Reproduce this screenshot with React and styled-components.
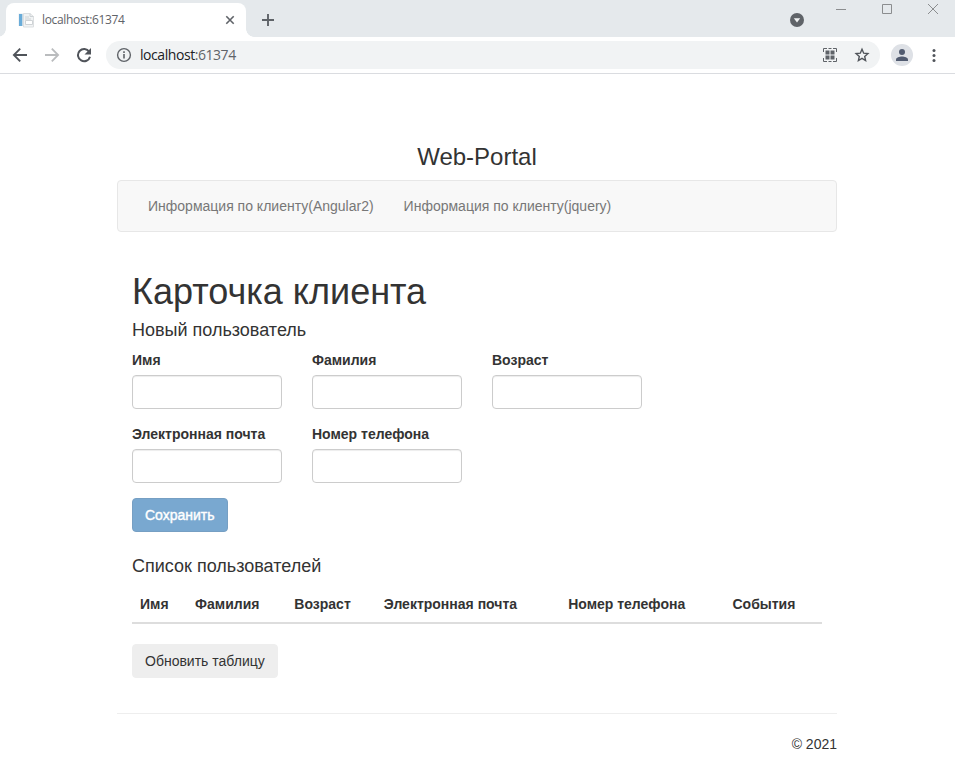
import React from "react";
import styled, { createGlobalStyle } from "styled-components";

const GlobalStyle = createGlobalStyle`
  *, *::before, *::after { box-sizing: border-box; }
  body {
    margin: 0;
    background: #fff;
    color: #333;
    font: 14px/20px "Liberation Sans", Arial, sans-serif;
  }
`;

const Screen = styled.div`
  height: 766px;
  overflow: hidden;
`;

/* Browser window */

const TabStrip = styled.div`
  display: flex;
  align-items: flex-start;
  height: 37px;
  background: #e5e9ec;
  color: #5f6368;
`;

const Tab = styled.div`
  position: relative;
  display: flex;
  align-items: center;
  width: 240px;
  height: 34px;
  margin: 3px 0 0 6px;
  padding: 0 10px 0 12px;
  border-radius: 8px 8px 0 0;
  background: #fff;

  &::before,
  &::after {
    content: "";
    position: absolute;
    bottom: 0;
    width: 8px;
    height: 8px;
  }
  &::before {
    left: -8px;
    background: radial-gradient(circle at 0 0, transparent 7.5px, #fff 8px);
  }
  &::after {
    right: -8px;
    background: radial-gradient(circle at 100% 0, transparent 7.5px, #fff 8px);
  }
`;

const TabTitle = styled.span`
  flex: 1;
  margin-left: 8px;
  font: 12px/16px "Open Sans", "Noto Sans", sans-serif;
  letter-spacing: -0.34px;
`;

const NewTab = styled.div`
  display: flex;
  margin: 13px 0 0 15px;
`;

const TabSearch = styled.div`
  display: flex;
  margin: 13px 0 0 auto;
`;

const WindowButtons = styled.div`
  display: flex;
  gap: 36px;
  margin: 4px 17px 0 32px;
`;

const Toolbar = styled.div`
  display: flex;
  align-items: center;
  height: 37px;
  padding: 0 13px 0 12px;
  border-bottom: 1px solid #dadce0;
  background: #fff;
  color: #5f6368;
`;

const NavButtons = styled.div`
  display: flex;
  gap: 16px;
`;

const AddressBar = styled.div`
  display: flex;
  flex: 1;
  align-items: center;
  height: 28px;
  margin: 0 11px 0 14px;
  padding: 0 10px;
  border-radius: 14px;
  background: #f1f3f4;
`;

const Address = styled.span`
  flex: 1;
  margin-left: 8px;
  color: #5f6368;
  font: 14px/20px "Open Sans", "Noto Sans", sans-serif;
  letter-spacing: -0.44px;
`;

const Host = styled.span`
  color: #202124;
`;

const AddressActions = styled.div`
  display: flex;
  gap: 16px;
`;

const Avatar = styled.div`
  display: flex;
  align-items: center;
  justify-content: center;
  width: 22px;
  height: 22px;
  margin-right: 13px;
  border-radius: 50%;
  background: #dee1e6;
`;

const Icon = styled.svg`
  display: block;
  flex: none;
`;

/* Page */

const Container = styled.div`
  width: 720px;
  margin: 0 0 0 117px;
  padding-top: 70px;
`;

const SiteTitle = styled.h3`
  margin: 0 0 10px;
  font-size: 24px;
  font-weight: 400;
  line-height: 26px;
  text-align: center;
`;

const Navbar = styled.nav`
  display: flex;
  align-items: center;
  height: 52px;
  padding: 0 15px;
  border: 1px solid #e7e7e7;
  border-radius: 4px;
  background: #f8f8f8;
`;

const NavLink = styled.a`
  padding: 15px;
  color: #777;
  text-decoration: none;
`;

const Content = styled.main`
  padding: 40px 15px 35px;
`;

const Title = styled.h1`
  margin: 0 0 8px;
  font-size: 36px;
  font-weight: 400;
  line-height: 40px;
`;

const SectionTitle = styled.h4`
  margin: 0 0 10px;
  font-size: 18px;
  font-weight: 400;
  line-height: 20px;
`;

const Form = styled.form`
  margin-bottom: 24px;
`;

const Fields = styled.div`
  display: grid;
  grid-template-columns: repeat(3, 150px);
  gap: 15px 30px;
  margin-bottom: 15px;
`;

const Label = styled.label`
  display: flex;
  flex-direction: column;
  gap: 5px;
  font-weight: 700;
  white-space: nowrap;
`;

const Input = styled.input`
  width: 100%;
  height: 34px;
  padding: 6px 12px;
  border: 1px solid #ccc;
  border-radius: 4px;
  background: #fff;
  box-shadow: inset 0 1px 1px rgba(0, 0, 0, 0.075);
  font: inherit;
`;

const Button = styled.button`
  display: block;
  height: 34px;
  padding: 6px 12px;
  border: 1px solid ${(p) => (p.$primary ? "#2e6da4" : "#eee")};
  border-radius: 4px;
  background: ${(p) => (p.$primary ? "#337ab7" : "#eee")};
  color: ${(p) => (p.$primary ? "#fff" : "#333")};
  font: 14px/20px "Liberation Sans", Arial, sans-serif;
  -webkit-text-stroke: ${(p) => (p.$primary ? "0.4px #fff" : "0")};

  &:disabled {
    opacity: 0.65;
  }
`;

const Table = styled.table`
  width: 100%;
  margin-bottom: 20px;
  border-collapse: collapse;
`;

const HeaderCell = styled.th`
  padding: 8px;
  border-bottom: 2px solid #ddd;
  text-align: left;
  vertical-align: bottom;
`;

const Footer = styled.footer`
  padding-top: 20px;
  border-top: 1px solid #eee;
  text-align: right;
`;

const fields = ["Имя", "Фамилия", "Возраст", "Электронная почта", "Номер телефона"];
const columns = [...fields, "События"];

function PageIcon() {
  return (
    <Icon width="16" height="16" viewBox="0 0 16 16">
      <path d="M.5 1.500h11l1 12.500H.5z" fill="#e6ebef" />
      <path d="M1 2h3v12H1z" fill="#69acd9" />
      <path d="M4 2h1v12H4z" fill="#c7d9e5" />
      <path d="M5.500 1.500h6.500l3.500 3v10.500H5.500z" fill="#f1f3f4" stroke="#dcdfe1" />
      <path d="M12 1.500v3h3.500M7 5h4M7 7h6" fill="none" stroke="#cdd2d5" />
      <path d="M7.500 8.500h7v4h-7z" fill="#fff" stroke="#cfd3d6" />
    </Icon>
  );
}

function BrowserChrome() {
  return (
    <header>
      <TabStrip>
        <Tab>
          <PageIcon />
          <TabTitle>localhost:61374</TabTitle>
          <Icon width="12" height="12" viewBox="0 0 12 12" stroke="currentColor" strokeWidth="1.6">
            <path d="M2.300 2.300l7.400 7.400M9.700 2.300l-7.400 7.400" />
          </Icon>
        </Tab>
        <NewTab>
          <Icon width="14" height="14" viewBox="0 0 14 14" stroke="currentColor" strokeWidth="1.9">
            <path d="M7 1v12M1 7h12" />
          </Icon>
        </NewTab>
        <TabSearch>
          <Icon width="14" height="14" viewBox="0 0 14 14">
            <circle cx="7" cy="7" r="7" fill="#5f6368" />
            <path d="M3.800 5.200h6.400L7 9.600z" fill="#f1f3f4" />
          </Icon>
        </TabSearch>
        <WindowButtons>
          <Icon width="10" height="10" viewBox="0 0 10 10" stroke="#8b8d8f">
            <path d="M0 5.500h10" />
          </Icon>
          <Icon width="10" height="10" viewBox="0 0 10 10" fill="none" stroke="#8b8d8f">
            <path d="M.5.500h9v9h-9z" />
          </Icon>
          <Icon width="10" height="10" viewBox="0 0 10 10" stroke="#8b8d8f">
            <path d="M0 0l10 10M10 0L0 10" />
          </Icon>
        </WindowButtons>
      </TabStrip>
      <Toolbar>
        <NavButtons>
          <Icon width="16" height="16" viewBox="0 0 16 16" fill="none" stroke="#50545a" strokeWidth="1.9">
            <path d="M15 8H2.500M8.200 1.700L1.900 8l6.300 6.300" />
          </Icon>
          <Icon width="16" height="16" viewBox="0 0 16 16" fill="none" stroke="#babcbe" strokeWidth="1.800">
            <path d="M1 8h12.500M7.800 1.700L14.100 8l-6.300 6.300" />
          </Icon>
          <Icon width="16" height="16" viewBox="0 0 16 16">
            <path d="M13.200 4.800A6.100 6.100 0 1 0 14 9.700" fill="none" stroke="#50545a" strokeWidth="2" />
            <path d="M15 1v6.500H8.500z" fill="#50545a" />
          </Icon>
        </NavButtons>
        <AddressBar>
          <Icon width="16" height="16" viewBox="0 0 16 16">
            <circle cx="8" cy="8" r="6.400" fill="none" stroke="currentColor" strokeWidth="1.400" />
            <path d="M7.200 7h1.600v4.500H7.200zM7.200 4.300h1.600v1.600H7.200z" fill="currentColor" />
          </Icon>
          <Address>
            <Host>localhost</Host>:61374
          </Address>
          <AddressActions>
            <Icon width="16" height="16" viewBox="0 0 16 16">
              <path
                d="M1.500 5V1.500H5M6.500 1.500h3M11 1.500h3.500V5M14.500 11v3.500H11M9.500 14.500h-3M5 14.500H1.500V11"
                fill="none"
                stroke="#5f6368"
              />
              <path d="M3.500 3.500h4v4h-4zM8.500 3.500h4v4h-4zM3.500 8.500h4v4h-4zM8.500 8.500h4v4h-4z" fill="#5f6368" />
            </Icon>
            <Icon width="16" height="16" viewBox="0 0 16 16" fill="none" stroke="#50545a" strokeWidth="1.400">
              <path d="M8 2.300l1.700 3.900 4.200.4-3.200 2.800.9 4.200L8 11.400l-3.600 2.200.9-4.200-3.200-2.800 4.200-.4z" />
            </Icon>
          </AddressActions>
        </AddressBar>
        <Avatar>
          <Icon width="12" height="12" viewBox="0 0 12 12" fill="#515b70">
            <circle cx="6" cy="3" r="3" />
            <path d="M0 12v-1.500C0 8.500 3.500 7.500 6 7.500s6 1 6 3V12z" />
          </Icon>
        </Avatar>
        <Icon width="16" height="16" viewBox="0 0 16 16" fill="#50545a">
          <circle cx="8" cy="3.500" r="1.500" />
          <circle cx="8" cy="8.500" r="1.500" />
          <circle cx="8" cy="13.500" r="1.500" />
        </Icon>
      </Toolbar>
    </header>
  );
}

export default function App() {
  return (
    <Screen>
      <GlobalStyle />
      <BrowserChrome />
      <Container>
        <SiteTitle>Web-Portal</SiteTitle>
        <Navbar>
          <NavLink>Информация по клиенту(Angular2)</NavLink>
          <NavLink>Информация по клиенту(jquery)</NavLink>
        </Navbar>
        <Content>
          <Title>Карточка клиента</Title>
          <SectionTitle>Новый пользователь</SectionTitle>
          <Form>
            <Fields>
              {fields.map((name) => (
                <Label key={name}>
                  {name}
                  <Input type="text" />
                </Label>
              ))}
            </Fields>
            <Button type="submit" $primary disabled>
              Сохранить
            </Button>
          </Form>
          <SectionTitle>Список пользователей</SectionTitle>
          <Table>
            <thead>
              <tr>
                {columns.map((name) => (
                  <HeaderCell key={name}>{name}</HeaderCell>
                ))}
              </tr>
            </thead>
          </Table>
          <Button type="button">Обновить таблицу</Button>
        </Content>
        <Footer>© 2021</Footer>
      </Container>
    </Screen>
  );
}
